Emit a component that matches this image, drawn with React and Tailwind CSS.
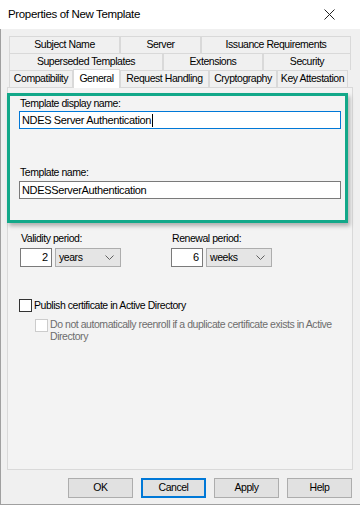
import React from 'react';

const font = { fontFamily: '"Liberation Sans", Arial, sans-serif' };

function Tab({ label, w, selected }) {
    return (
        <div
            className={`flex items-center justify-center border-t border-l border-r border-[#d9d9d9] text-[10.5px] tracking-[-0.45px] text-[#000] whitespace-nowrap ${
                selected ? 'bg-white h-[19px] -mt-[2px] -mb-px relative z-10 border-b-0' : 'bg-[#f0f0f0] h-[17px]'
            }`}
            style={{ width: w }}
        >
            {label}
        </div>
    );
}

function Chevron() {
    return (
        <svg width="9" height="5" viewBox="0 0 9 5" className="shrink-0">
            <path d="M0.5 0.5 L4.5 4.5 L8.5 0.5" fill="none" stroke="#606060" strokeWidth="1" />
        </svg>
    );
}

function PeriodField({ label, value, unit }) {
    return (
        <div className="flex flex-col">
            <span className="text-[10.5px] tracking-[-0.45px] leading-[12px] pl-[1px]">{label}</span>
            <div className="flex gap-[3px] mt-[4px]">
                <div className="w-[32px] h-[19px] bg-white border border-[#7a7a7a] flex items-center justify-end pr-[3px] text-[11px]">
                    {value}
                </div>
                <div className="w-[66px] h-[19px] bg-[#e5e5e5] border border-[#adadad] flex items-center justify-between pl-[3px] pr-[6px] text-[10.5px] tracking-[-0.45px]">
                    <span>{unit}</span>
                    <Chevron />
                </div>
            </div>
        </div>
    );
}

function Button({ label, focused }) {
    return (
        <div
            className={`w-[65px] h-[20px] flex items-center justify-center bg-[#e1e1e1] text-[10.5px] tracking-[-0.45px] ${
                focused ? 'border-2 border-[#0078d7]' : 'border border-[#adadad]'
            }`}
        >
            {label}
        </div>
    );
}

export default function App() {
    return (
        <div className="w-[360px] h-[505px] bg-[#f0f0f0] flex flex-col overflow-hidden text-black" style={font}>
            {/* Title bar */}
            <div className="h-[29px] bg-white flex items-center justify-between pl-[8px] pr-[25px] shrink-0">
                <span className="text-[11.5px] tracking-[-0.35px]">Properties of New Template</span>
                <svg width="11" height="11" viewBox="0 0 11 11">
                    <path d="M0.5 0.5 L10.5 10.5 M10.5 0.5 L0.5 10.5" stroke="#222" strokeWidth="1" />
                </svg>
            </div>

            <div className="flex-1 flex flex-col border-l border-[#a0a0a0] border-b">
                {/* Tab strip */}
                <div className="flex flex-col pl-[8px] mt-[7px]">
                    <div className="flex">
                        <Tab label="Subject Name" w={111} />
                        <Tab label="Server" w={81} />
                        <Tab label="Issuance Requirements" w={150} />
                    </div>
                    <div className="flex">
                        <Tab label="Superseded Templates" w={154} />
                        <Tab label="Extensions" w={100} />
                        <Tab label="Security" w={88} />
                    </div>
                    <div className="flex items-end">
                        <Tab label="Compatibility" w={64} />
                        <Tab label="General" w={47} selected />
                        <Tab label="Request Handling" w={89} />
                        <Tab label="Cryptography" w={68} />
                        <Tab label="Key Attestation" w={71} />
                    </div>
                </div>

                {/* Tab page */}
                <div className="ml-[6px] w-[346px] h-[383px] bg-[#f3f3f3] border border-[#d9d9d9] flex flex-col">
                    <div className="mt-[5px] -ml-px w-[341px] h-[130px] border-[3px] border-[#12a889] shadow-[2px_3px_4px_rgba(0,0,0,0.28)] flex flex-col pl-[9px] pr-[4px]">
                        <span className="text-[10.5px] tracking-[-0.45px] leading-[12px] pl-[1px] mt-[1px]">Template display name:</span>
                        <div className="mt-[2px] w-[322px] h-[18px] bg-white border border-[#0078d7] flex items-center pl-[2px] text-[11px] tracking-[-0.35px]">
                            NDES Server Authentication<span className="w-px h-[13px] bg-black ml-[1px]"></span>
                        </div>
                        <span className="text-[10.5px] tracking-[-0.45px] leading-[12px] pl-[1px] mt-[37px]">Template name:</span>
                        <div className="mt-[3px] w-[322px] h-[18px] bg-white border border-[#7a7a7a] flex items-center pl-[2px] text-[11px] tracking-[-0.35px]">
                            NDESServerAuthentication
                        </div>
                    </div>

                    <div className="flex mt-[9px] pl-[12px] gap-[50px]">
                        <PeriodField label="Validity period:" value="2" unit="years" />
                        <PeriodField label="Renewal period:" value="6" unit="weeks" />
                    </div>

                    <div className="flex items-center mt-[31px] pl-[11px]">
                        <div className="w-[13px] h-[13px] bg-white border border-[#333]"></div>
                        <span className="ml-[2px] text-[10.5px] tracking-[-0.45px]">Publish certificate in Active Directory</span>
                    </div>
                    <div className="flex items-start mt-[4px] pl-[27px] pr-[14px]">
                        <div className="w-[13px] h-[13px] bg-white border border-[#cccccc] shrink-0 mt-px"></div>
                        <span className="ml-[2px] text-[10.5px] tracking-[-0.45px] leading-[12px] text-[#6d6d6d]">
                            Do not automatically reenroll if a duplicate certificate exists in Active Directory
                        </span>
                    </div>
                </div>

                {/* Buttons */}
                <div className="flex justify-end gap-[8px] mt-[8px] pr-[8px]">
                    <Button label="OK" />
                    <Button label="Cancel" focused />
                    <Button label="Apply" />
                    <Button label="Help" />
                </div>
            </div>
        </div>
    );
}
